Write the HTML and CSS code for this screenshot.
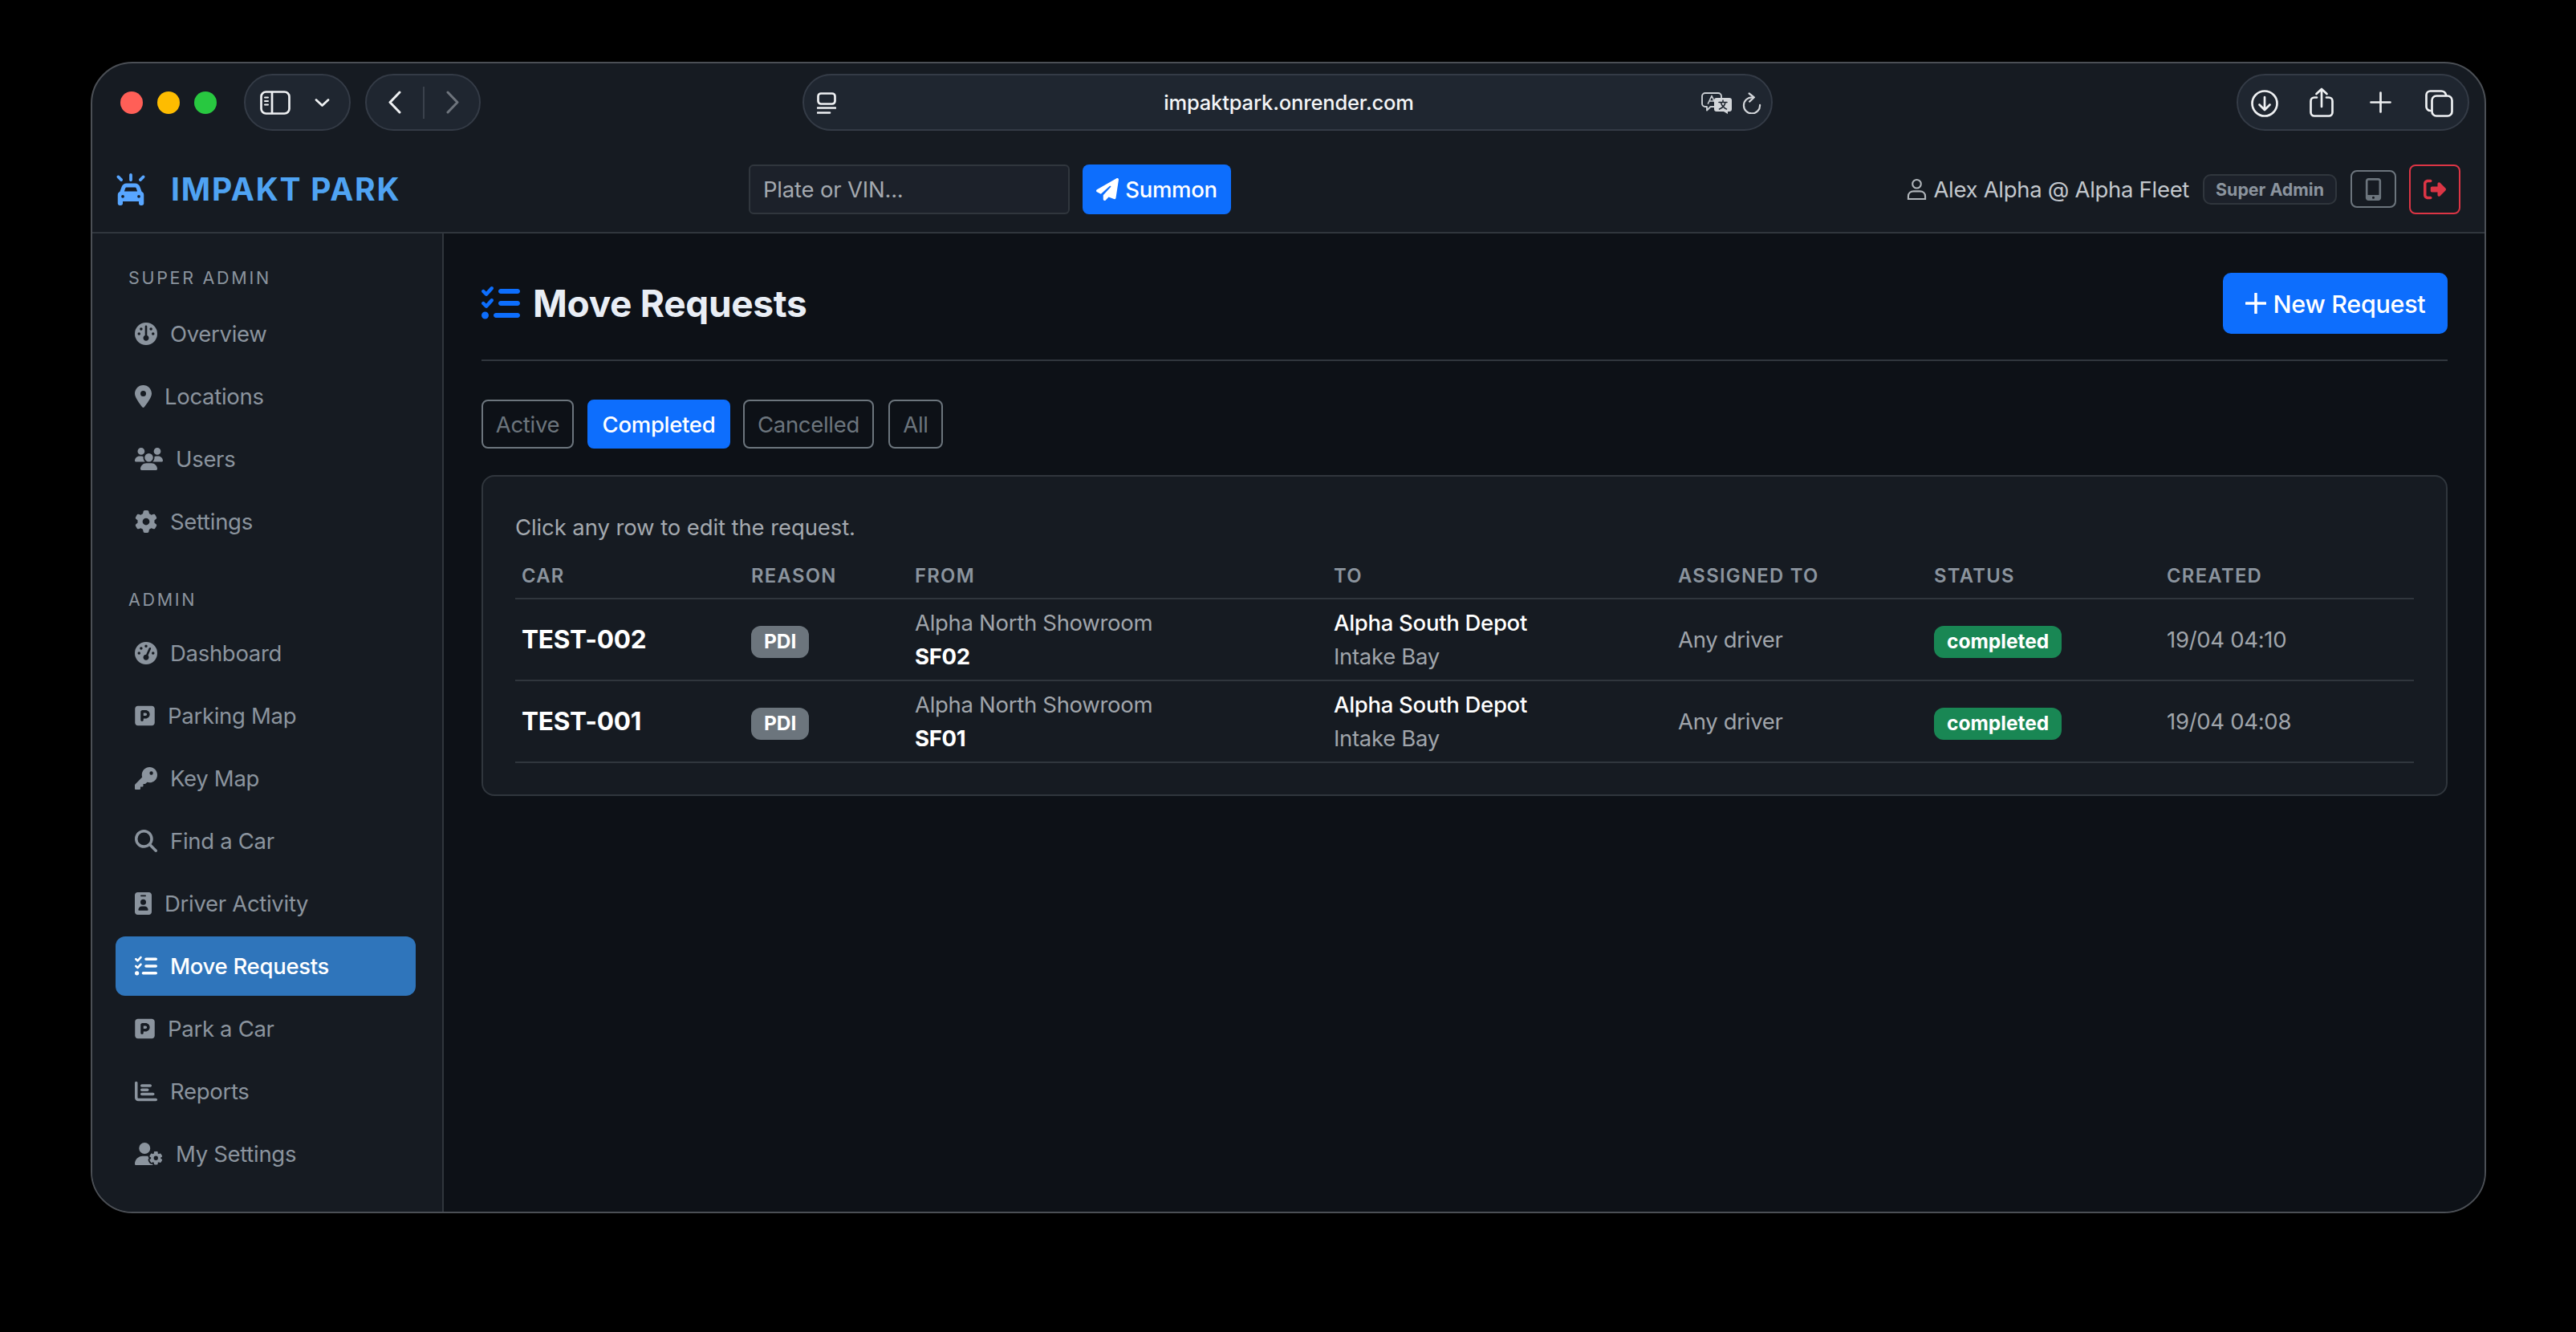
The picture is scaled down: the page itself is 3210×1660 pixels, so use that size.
FILE: index.html
```html
<!DOCTYPE html>
<html lang="en">
<head>
<meta charset="utf-8">
<title>Impakt Park - Move Requests</title>
<link rel="stylesheet" href="styles.css">
</head>
<body>
<div class="window">
  <header class="toolbar">
    <div class="lights"><span class="light l-red"></span><span class="light l-yellow"></span><span class="light l-green"></span></div>
    <div class="pill pill-side">
      <svg class="t-icon side-ic" viewBox="0 0 38 30"><rect x="1.500" y="1.500" width="35" height="27" rx="6"/><path d="M15 2v26"/><path d="M6 8.500h4M6 13h4M6 17.500h4" stroke-width="2"/></svg>
      <svg class="t-icon chev" viewBox="0 0 19 10"><path d="M2 1.500l7.500 7 7.500-7"/></svg>
    </div>
    <div class="pill pill-nav">
      <svg class="t-icon back" viewBox="0 0 17 29"><path d="M15 2L3 14.500 15 27"/></svg>
      <span class="pill-div"></span>
      <svg class="t-icon fwd" viewBox="0 0 17 29"><path d="M2 2l12 12.500L2 27"/></svg>
    </div>
    <div class="pill pill-url">
      <svg class="t-icon tabs-ic" viewBox="0 0 24 27"><rect x="1.500" y="1.500" width="21" height="13" rx="3.500"/><path d="M1 19.500h22M1 25.500h15"/></svg>
      <span class="url">impaktpark.onrender.com</span>
      <svg class="t-icon trans-ic" viewBox="0 0 38 27"><path d="M5 1h16a4 4 0 0 1 4 4v9a4 4 0 0 1-4 4H11.500L7 22.500V18H5a4 4 0 0 1-4-4V5a4 4 0 0 1 4-4z"/><path d="M8.500 14L13 4.500 17.500 14M10.200 11h5.600" stroke-width="1.700"/><path class="t-fill" d="M19 7h16a3 3 0 0 1 3 3v11a3 3 0 0 1-3 3h-2v3l-5-3h-9a3 3 0 0 1-3-3V10a3 3 0 0 1 3-3z"/><path class="t-dark" d="M22 12.500h10M27 10v2.500M30 12.500c-.8 4-3.500 7-7.500 8.500M24.500 13c1 3.500 3.500 6.500 7 8" stroke-width="1.500"/></svg>
      <svg class="t-icon reload-ic" viewBox="0 0 25 28"><path d="M13 6.500A10.500 10.500 0 1 0 23 16.500"/><path d="M9 1.500l6.500 5L9.500 12"/></svg>
    </div>
    <div class="pill pill-actions">
      <svg class="t-icon act-dl" viewBox="0 0 34 34"><circle cx="17" cy="17" r="15.500"/><path d="M17 9v16M10.500 18.500L17 25l6.500-6.500"/></svg>
      <svg class="t-icon act-sh" viewBox="0 0 30 37"><path d="M9 12.500H6a4.500 4.500 0 0 0-4.500 4.500v14A4.500 4.500 0 0 0 6 35.500h18a4.500 4.500 0 0 0 4.500-4.500V17a4.500 4.500 0 0 0-4.500-4.500h-3"/><path d="M15 24V2M8.500 8L15 2l6.500 6"/></svg>
      <svg class="t-icon act-pl" viewBox="0 0 27 27"><path d="M13.500 1.500v24M1.500 13.500h24"/></svg>
      <svg class="t-icon act-tb" viewBox="0 0 35 34"><path d="M6.500 26A5 5 0 0 1 1.500 21V6.500a5 5 0 0 1 5-5H20a6 6 0 0 1 6 5"/><rect x="8.500" y="7.500" width="25" height="25" rx="5.500"/></svg>
    </div>
  </header>

  <nav class="navbar">
    <a class="brand">
      <svg class="brand-ic" viewBox="0 0 512 512"><path d="M280 24c0-13.300-10.700-24-24-24s-24 10.700-24 24v80c0 13.300 10.700 24 24 24s24-10.700 24-24V24zM185.800 224H326.200c6.800 0 12.800 4.300 15.100 10.600L360.300 288H151.700l19-53.400c2.300-6.400 8.300-10.600 15.100-10.600zm-75.300-10.900L82.200 292.400C62.100 300.900 48 320.800 48 344v40 64 32c0 17.700 14.300 32 32 32H96c17.700 0 32-14.300 32-32V448H384v32c0 17.700 14.300 32 32 32h16c17.700 0 32-14.300 32-32V448 384 344c0-23.200-14.100-43.100-34.200-51.600l-28.300-79.300C390.100 181.300 360 160 326.200 160H185.800c-33.800 0-64 21.300-75.300 53.100zM128 344a24 24 0 1 1 0 48 24 24 0 1 1 0-48zm232 24a24 24 0 1 1 48 0 24 24 0 1 1 -48 0zM39 39c-9.400 9.400-9.400 24.600 0 33.900l48 48c9.400 9.400 24.600 9.400 33.900 0s9.400-24.600 0-33.900L73 39c-9.400-9.400-24.600-9.400-33.900 0zm400 0L391 87c-9.400 9.400-9.400 24.600 0 33.900s24.600 9.400 33.900 0l48-48c9.400-9.400 9.400-24.600 0-33.900s-24.600-9.400-33.900 0z"/></svg>
      <span class="brand-text">IMPAKT PARK</span>
    </a>
    <form class="summon">
      <input class="summon-input" type="text" placeholder="Plate or VIN...">
      <button class="btn-primary summon-btn" type="button">
        <svg class="summon-ic" viewBox="0 0 512 512"><path d="M498.100 5.600c10.100 7 15.400 19.100 13.500 31.200l-64 416c-1.500 9.700-7.400 18.200-16 23s-18.900 5.400-28 1.600L284 427.700l-68.500 74.100c-8.900 9.700-22.900 12.900-35.200 8.100S160 493.200 160 480V396.400c0-4 1.500-7.800 4.200-10.700L331.800 202.800c5.800-6.300 5.600-16-.4-22s-15.700-6.400-22-.7L106 360.800 17.700 316.600C7.100 311.300 .3 300.700 0 288.900s5.900-22.800 16.100-28.700l448-256c10.700-6.100 23.900-5.500 34 1.400z"/></svg>
        Summon
      </button>
    </form>
    <div class="userbar">
      <svg class="user-ic" viewBox="0 0 26 28"><circle cx="13" cy="7.500" r="5.500"/><path d="M2 27h22v-3.500c0-4-3-6.500-7-6.500H9c-4 0-7 2.500-7 6.500z"/></svg>
      <span class="user-name">Alex Alpha @ Alpha Fleet</span>
      <span class="role-badge">Super Admin</span>
      <button class="icon-btn phone-btn" type="button">
        <svg class="phone-ic" viewBox="0 0 384 512"><path d="M80 0C44.700 0 16 28.700 16 64V448c0 35.300 28.700 64 64 64H304c35.300 0 64-28.700 64-64V64c0-35.300-28.700-64-64-64H80zM64 64c0-8.800 7.200-16 16-16H304c8.800 0 16 7.200 16 16V384H64V64zM192 472a28 28 0 1 1 0-56 28 28 0 1 1 0 56z"/></svg>
      </button>
      <button class="icon-btn logout-btn" type="button">
        <svg class="logout-ic" viewBox="0 0 512 512"><path d="M377.900 105.900L500.700 228.700c7.200 7.200 11.300 17.100 11.300 27.300s-4.100 20.100-11.300 27.300L377.900 406.100c-6.400 6.400-15 9.900-24 9.900c-18.700 0-33.900-15.200-33.900-33.900l0-62.100-128 0c-17.700 0-32-14.300-32-32l0-64c0-17.700 14.300-32 32-32l128 0 0-62.100c0-18.700 15.200-33.900 33.900-33.900c9 0 17.600 3.600 24 9.900zM160 96L96 96c-17.700 0-32 14.300-32 32l0 256c0 17.700 14.300 32 32 32l64 0c17.700 0 32 14.300 32 32s-14.300 32-32 32l-64 0c-53 0-96-43-96-96L0 128C0 75 43 32 96 32l64 0c17.700 0 32 14.300 32 32s-14.300 32-32 32z"/></svg>
      </button>
    </div>
  </nav>

  <div class="body-row">
    <aside class="sidebar">
      <div class="side-label">SUPER ADMIN</div>
      <a class="side-link"><svg class="ic w28" viewBox="0 0 512 512"><path d="M0 256a256 256 0 1 1 512 0A256 256 0 1 1 0 256zm320 96c0-26.900-16.500-49.900-40-59.300V88c0-13.300-10.700-24-24-24s-24 10.700-24 24V292.700c-23.500 9.500-40 32.500-40 59.300c0 35.300 28.700 64 64 64s64-28.700 64-64zM144 176a32 32 0 1 0 0-64 32 32 0 1 0 0 64zm-16 80a32 32 0 1 0 -64 0 32 32 0 1 0 64 0zm288 32a32 32 0 1 0 0-64 32 32 0 1 0 0 64zM400 144a32 32 0 1 0 -64 0 32 32 0 1 0 64 0z"/></svg>Overview</a>
      <a class="side-link"><svg class="ic w21" viewBox="0 0 384 512"><path d="M215.700 499.200C267 435 384 279.400 384 192C384 86 298 0 192 0S0 86 0 192c0 87.400 117 243 168.300 307.200c12.300 15.300 35.100 15.300 47.400 0zM192 128a64 64 0 1 1 0 128 64 64 0 1 1 0-128z"/></svg>Locations</a>
      <a class="side-link"><svg class="ic w35" viewBox="0 0 640 512"><path d="M144 0a80 80 0 1 1 0 160A80 80 0 1 1 144 0zM512 0a80 80 0 1 1 0 160A80 80 0 1 1 512 0zM0 298.700C0 239.800 47.800 192 106.700 192h42.700c15.900 0 31 3.500 44.600 9.700c-1.300 7.200-1.900 14.700-1.900 22.300c0 38.200 16.800 72.500 43.300 96c-.2 0-.4 0-.7 0H21.300C9.600 320 0 310.400 0 298.700zM405.300 320c-.2 0-.4 0-.7 0c26.600-23.500 43.300-57.800 43.300-96c0-7.600-.7-15-1.900-22.300c13.600-6.300 28.700-9.700 44.600-9.700h42.700C592.200 192 640 239.800 640 298.700c0 11.800-9.600 21.300-21.300 21.300H405.300zM224 224a96 96 0 1 1 192 0 96 96 0 1 1 -192 0zM128 485.300C128 411.700 187.700 352 261.300 352H378.700C452.300 352 512 411.700 512 485.300c0 14.700-11.900 26.700-26.700 26.700H154.700c-14.700 0-26.700-11.900-26.700-26.700z"/></svg>Users</a>
      <a class="side-link"><svg class="ic w28" viewBox="0 0 512 512"><path d="M495.900 166.600c3.200 8.700 .5 18.400-6.400 24.600l-43.300 39.400c1.100 8.300 1.700 16.800 1.700 25.400s-.6 17.100-1.700 25.400l43.300 39.400c6.900 6.200 9.600 15.900 6.400 24.600c-4.400 11.900-9.700 23.300-15.800 34.300l-4.700 8.100c-6.600 11-14 21.400-22.100 31.200c-5.900 7.200-15.700 9.600-24.500 6.800l-55.700-17.700c-13.400 10.300-28.200 18.900-44 25.400l-12.500 57.100c-2 9.100-9 16.300-18.200 17.800c-13.800 2.300-28 3.500-42.500 3.500s-28.700-1.200-42.500-3.500c-9.200-1.500-16.200-8.700-18.200-17.800l-12.500-57.100c-15.800-6.500-30.600-15.100-44-25.400L83.100 425.900c-8.800 2.800-18.600 .3-24.500-6.800c-8.100-9.800-15.500-20.200-22.100-31.200l-4.700-8.100c-6.100-11-11.400-22.400-15.800-34.300c-3.200-8.700-.5-18.400 6.400-24.600l43.300-39.400C64.600 273.100 64 264.600 64 256s.6-17.100 1.700-25.400L22.400 191.200c-6.900-6.200-9.600-15.900-6.400-24.600c4.400-11.900 9.700-23.300 15.800-34.300l4.700-8.100c6.600-11 14-21.400 22.100-31.200c5.900-7.200 15.700-9.600 24.500-6.800l55.700 17.700c13.400-10.300 28.200-18.900 44-25.400l12.500-57.100c2-9.100 9-16.300 18.200-17.800C227.300 1.200 241.500 0 256 0s28.700 1.200 42.500 3.500c9.200 1.500 16.200 8.700 18.200 17.800l12.500 57.100c15.800 6.500 30.600 15.100 44 25.400l55.700-17.700c8.800-2.800 18.600-.3 24.500 6.800c8.100 9.800 15.500 20.200 22.100 31.200l4.700 8.100c6.100 11 11.400 22.400 15.800 34.300zM256 336a80 80 0 1 0 0-160 80 80 0 1 0 0 160z"/></svg>Settings</a>

      <div class="side-label second">ADMIN</div>
      <a class="side-link"><svg class="ic w28" viewBox="0 0 512 512"><path d="M0 256a256 256 0 1 1 512 0A256 256 0 1 1 0 256zM288 96a32 32 0 1 0 -64 0 32 32 0 1 0 64 0zM256 416c35.300 0 64-28.700 64-64c0-17.400-6.900-33.100-18.100-44.600L366 161.700c5.300-12.100-.2-26.300-12.300-31.600s-26.300 .2-31.600 12.300L257.900 288c-.6 0-1.300 0-1.900 0c-35.300 0-64 28.700-64 64s28.700 64 64 64zM176 144a32 32 0 1 0 -64 0 32 32 0 1 0 64 0zM96 288a32 32 0 1 0 0-64 32 32 0 1 0 0 64zm352-32a32 32 0 1 0 -64 0 32 32 0 1 0 64 0z"/></svg>Dashboard</a>
      <a class="side-link"><svg class="ic w25" viewBox="0 0 448 512"><path d="M64 32C28.700 32 0 60.700 0 96V416c0 35.300 28.700 64 64 64H384c35.300 0 64-28.700 64-64V96c0-35.300-28.700-64-64-64H64zM192 256h48c17.700 0 32-14.300 32-32s-14.300-32-32-32H192v64zm48 64H192v32c0 17.700-14.300 32-32 32s-32-14.300-32-32V288 168c0-22.100 17.900-40 40-40h72c53 0 96 43 96 96s-43 96-96 96z"/></svg>Parking Map</a>
      <a class="side-link"><svg class="ic w28" viewBox="0 0 512 512"><path d="M336 352c97.200 0 176-78.800 176-176S433.200 0 336 0S160 78.800 160 176c0 18.700 2.900 36.800 8.300 53.700L7 391c-4.500 4.500-7 10.600-7 17v80c0 13.300 10.700 24 24 24h80c13.300 0 24-10.700 24-24V448h40c13.300 0 24-10.700 24-24V384h40c6.400 0 12.500-2.500 17-7l33.300-33.300c16.900 5.400 35 8.300 53.700 8.300zM376 96a40 40 0 1 1 0 80 40 40 0 1 1 0-80z"/></svg>Key Map</a>
      <a class="side-link"><svg class="ic w28" viewBox="0 0 512 512"><path d="M416 208c0 45.900-14.900 88.300-40 122.700L502.600 457.400c12.500 12.500 12.500 32.800 0 45.300s-32.800 12.500-45.300 0L330.700 376c-34.400 25.200-76.800 40-122.700 40C93.100 416 0 322.900 0 208S93.100 0 208 0S416 93.100 416 208zM208 352a144 144 0 1 0 0-288 144 144 0 1 0 0 288z"/></svg>Find a Car</a>
      <a class="side-link"><svg class="ic w21" viewBox="0 0 384 512"><path d="M64 0C28.700 0 0 28.700 0 64V448c0 35.300 28.700 64 64 64H320c35.300 0 64-28.700 64-64V64c0-35.300-28.700-64-64-64H64zm96 320h64c44.200 0 80 35.800 80 80c0 8.800-7.200 16-16 16H96c-8.800 0-16-7.200-16-16c0-44.200 35.800-80 80-80zm-32-96a64 64 0 1 1 128 0 64 64 0 1 1 -128 0zM144 64h96c8.800 0 16 7.200 16 16s-7.200 16-16 16H144c-8.800 0-16-7.200-16-16s7.200-16 16-16z"/></svg>Driver Activity</a>
      <a class="side-link active"><svg class="ic w28" viewBox="0 0 512 512"><path d="M152.100 38.200c9.900 8.900 10.700 24 1.800 33.900l-72 80c-4.400 4.900-10.600 7.800-17.200 7.900s-12.900-2.400-17.600-7L7 113C-2.300 103.600-2.300 88.400 7 79s24.600-9.400 33.900 0l22.100 22.100 55.100-61.200c8.900-9.900 24-10.700 33.900-1.800zm0 160c9.900 8.900 10.700 24 1.800 33.900l-72 80c-4.400 4.900-10.600 7.800-17.200 7.900s-12.900-2.400-17.600-7L7 273c-9.400-9.400-9.400-24.600 0-33.900s24.600-9.400 33.900 0l22.100 22.100 55.100-61.200c8.900-9.900 24-10.700 33.900-1.800zM224 96c0-17.700 14.300-32 32-32H480c17.700 0 32 14.300 32 32s-14.300 32-32 32H256c-17.700 0-32-14.300-32-32zm0 160c0-17.700 14.300-32 32-32H480c17.700 0 32 14.300 32 32s-14.300 32-32 32H256c-17.700 0-32-14.300-32-32zM160 416c0-17.700 14.300-32 32-32H480c17.700 0 32 14.300 32 32s-14.300 32-32 32H192c-17.700 0-32-14.300-32-32zM48 368a48 48 0 1 1 0 96 48 48 0 1 1 0-96z"/></svg>Move Requests</a>
      <a class="side-link"><svg class="ic w25" viewBox="0 0 448 512"><path d="M64 32C28.700 32 0 60.700 0 96V416c0 35.300 28.700 64 64 64H384c35.300 0 64-28.700 64-64V96c0-35.300-28.700-64-64-64H64zM192 256h48c17.700 0 32-14.300 32-32s-14.300-32-32-32H192v64zm48 64H192v32c0 17.700-14.300 32-32 32s-32-14.300-32-32V288 168c0-22.100 17.900-40 40-40h72c53 0 96 43 96 96s-43 96-96 96z"/></svg>Park a Car</a>
      <a class="side-link"><svg class="ic w28" viewBox="0 0 512 512"><path d="M32 32c17.700 0 32 14.300 32 32V400c0 8.800 7.200 16 16 16H480c17.700 0 32 14.300 32 32s-14.300 32-32 32H80c-44.200 0-80-35.800-80-80V64C0 46.300 14.300 32 32 32zm96 96c0-17.700 14.300-32 32-32l192 0c17.700 0 32 14.300 32 32s-14.300 32-32 32l-192 0c-17.700 0-32-14.300-32-32zm32 64H288c17.700 0 32 14.300 32 32s-14.300 32-32 32H160c-17.700 0-32-14.300-32-32s14.300-32 32-32zm0 96H416c17.700 0 32 14.300 32 32s-14.300 32-32 32H160c-17.700 0-32-14.300-32-32s14.300-32 32-32z"/></svg>Reports</a>
      <a class="side-link"><svg class="ic w35" viewBox="0 0 640 512"><path d="M224 0a128 128 0 1 1 0 256A128 128 0 1 1 224 0zM178.300 304h91.400c11.800 0 23.400 1.200 34.500 3.300c-2.100 18.500 7.400 35.600 21.800 44.800c-16.600 10.600-26.700 31.600-20 53.300c4 12.900 9.400 25.500 16.400 37.600s15.200 23.100 24.400 33c15.700 16.900 39.600 18.400 57.200 8.700v.9c0 9.200 2.700 18.500 7.900 26.300H29.700C13.300 512 0 498.700 0 482.300C0 383.800 79.800 304 178.300 304zM436 218.200c0-7 4.500-13.300 11.300-14.800c10.500-2.400 21.500-3.700 32.700-3.700s22.200 1.300 32.700 3.700c6.800 1.500 11.300 7.800 11.300 14.800v30.600c7.900 3.400 15.400 7.700 22.300 12.800l24.900-14.300c6.100-3.500 13.700-2.700 18.500 2.400c7.600 8.100 14.300 17.200 20.100 27.200s10.300 20.400 13.500 31c2.100 6.700-1.100 13.700-7.200 17.200l-25 14.400c.4 4 .7 8.100 .7 12.300s-.2 8.200-.7 12.300l25 14.400c6.100 3.500 9.200 10.500 7.200 17.200c-3.300 10.600-7.800 21-13.500 31s-12.500 19.100-20.100 27.200c-4.800 5.100-12.500 5.900-18.500 2.400l-24.900-14.300c-6.900 5.100-14.300 9.400-22.300 12.800l0 30.600c0 7-4.500 13.300-11.300 14.800c-10.500 2.400-21.500 3.700-32.700 3.700s-22.200-1.300-32.700-3.700c-6.800-1.500-11.300-7.800-11.300-14.800V454.800c-8-3.400-15.600-7.700-22.500-12.900l-24.700 14.300c-6.100 3.500-13.700 2.700-18.500-2.400c-7.600-8.100-14.300-17.200-20.100-27.200s-10.300-20.400-13.500-31c-2.100-6.700 1.100-13.700 7.200-17.200l24.800-14.300c-.4-4.100-.7-8.200-.7-12.400s.3-8.300 .7-12.400L343.800 325c-6.100-3.500-9.200-10.500-7.200-17.200c3.300-10.600 7.700-21 13.500-31s12.500-19.100 20.100-27.200c4.800-5.100 12.400-5.900 18.500-2.400l24.800 14.300c6.900-5.100 14.500-9.400 22.500-12.900V218.200zm92.100 133.500a48.100 48.100 0 1 0 -96.100 0 48.100 48.100 0 1 0 96.100 0z"/></svg>My Settings</a>
    </aside>

    <main class="main">
      <div class="page-head">
        <h1 class="page-title">
          <svg class="title-ic" viewBox="0 0 512 512"><path d="M152.100 38.200c9.900 8.900 10.700 24 1.800 33.900l-72 80c-4.400 4.900-10.600 7.800-17.200 7.900s-12.900-2.400-17.600-7L7 113C-2.300 103.600-2.300 88.400 7 79s24.600-9.400 33.900 0l22.100 22.100 55.100-61.200c8.900-9.900 24-10.700 33.900-1.800zm0 160c9.900 8.900 10.700 24 1.800 33.900l-72 80c-4.400 4.900-10.600 7.800-17.200 7.900s-12.900-2.400-17.600-7L7 273c-9.400-9.400-9.400-24.600 0-33.900s24.600-9.400 33.900 0l22.100 22.100 55.100-61.200c8.900-9.900 24-10.700 33.900-1.800zM224 96c0-17.700 14.300-32 32-32H480c17.700 0 32 14.300 32 32s-14.300 32-32 32H256c-17.700 0-32-14.300-32-32zm0 160c0-17.700 14.300-32 32-32H480c17.700 0 32 14.300 32 32s-14.300 32-32 32H256c-17.700 0-32-14.300-32-32zM160 416c0-17.700 14.300-32 32-32H480c17.700 0 32 14.300 32 32s-14.300 32-32 32H192c-17.700 0-32-14.300-32-32zM48 368a48 48 0 1 1 0 96 48 48 0 1 1 0-96z"/></svg>
          Move Requests
        </h1>
        <button class="btn-primary new-btn" type="button"><svg class="plus-ic" viewBox="0 0 26 26"><path d="M13 1v24M1 13h24"/></svg>New Request</button>
      </div>

      <div class="tabs">
        <a class="tab tab-1">Active</a>
        <a class="tab tab-on">Completed</a>
        <a class="tab tab-3">Cancelled</a>
        <a class="tab tab-4">All</a>
      </div>

      <section class="card">
        <p class="hint">Click any row to edit the request.</p>
        <table class="grid">
          <colgroup><col class="c1"><col class="c2"><col class="c3"><col class="c4"><col class="c5"><col class="c6"><col class="c7"></colgroup>
          <thead><tr><th>CAR</th><th>REASON</th><th>FROM</th><th>TO</th><th>ASSIGNED TO</th><th>STATUS</th><th>CREATED</th></tr></thead>
          <tbody>
            <tr>
              <td class="car">TEST-002</td>
              <td><span class="badge gray">PDI</span></td>
              <td><div class="muted">Alpha North Showroom</div><div class="strong">SF02</div></td>
              <td><div class="white">Alpha South Depot</div><div class="muted">Intake Bay</div></td>
              <td class="muted">Any driver</td>
              <td><span class="badge green">completed</span></td>
              <td class="muted">19/04 04:10</td>
            </tr>
            <tr>
              <td class="car">TEST-001</td>
              <td><span class="badge gray">PDI</span></td>
              <td><div class="muted">Alpha North Showroom</div><div class="strong">SF01</div></td>
              <td><div class="white">Alpha South Depot</div><div class="muted">Intake Bay</div></td>
              <td class="muted">Any driver</td>
              <td><span class="badge green">completed</span></td>
              <td class="muted">19/04 04:08</td>
            </tr>
          </tbody>
        </table>
      </section>
    </main>
  </div>
</div>
</body>
</html>
```

FILE: styles.css
```css
* { box-sizing: border-box; }
html, body { margin: 0; height: 100%; }
body {
  background: #000;
  padding: 77px 0 0 113px;
  font-family: Inter, "Liberation Sans", sans-serif;
  letter-spacing: -0.3px;
  color: #c9d1d9;
  overflow: hidden;
}
.window {
  width: 2985px;
  height: 1435px;
  border: 2px solid #4b4f55;
  border-radius: 52px;
  background: #161b22;
  overflow: hidden;
  display: flex;
  flex-direction: column;
}

/* browser toolbar */
.toolbar {
  height: 103px;
  flex: none;
  display: flex;
  align-items: flex-start;
  padding-top: 13px;
}
.lights { display: flex; gap: 18px; margin: 22px 0 0 35px; }
.light { width: 28px; height: 28px; border-radius: 50%; }
.l-red { background: #ff5f57; }
.l-yellow { background: #febc00; }
.l-green { background: #28c840; }
.pill {
  height: 71px;
  border: 2px solid #343b46;
  border-radius: 36px;
  background: #1f2630;
  display: flex;
  align-items: center;
  flex: none;
}
.t-icon { fill: none; stroke: #eef0f2; stroke-width: 2.700; stroke-linecap: round; stroke-linejoin: round; display: block; flex: none; }
.pill-side { width: 133px; margin-left: 34px; padding-left: 18px; }
.side-ic { width: 38px; height: 30px; }
.chev { width: 19px; height: 10px; margin-left: 30px; }
.pill-nav { width: 144px; margin-left: 18px; padding-left: 26px; }
.back { width: 17px; height: 29px; stroke-width: 3; }
.pill-div { width: 1.500px; height: 40px; background: #3a414c; margin: 0 27px; }
.fwd { width: 17px; height: 29px; stroke: #6e747c; stroke-width: 3; }
.pill-url { width: 1209px; margin-left: 401px; padding: 0 12px 0 16px; }
.tabs-ic { width: 24px; height: 27px; margin-top: 2px; }
.url { flex: 1; text-align: center; font-size: 25.500px; font-weight: 500; letter-spacing: -0.15px; color: #f3f5f7; padding-left: 50px; }
.trans-ic { width: 38px; height: 27px; margin: 2px 13px 0 0; stroke: #c8ccd1; stroke-width: 1.900; }
.trans-ic .t-fill { fill: #d3d6da; stroke: none; }
.trans-ic .t-dark { stroke: #1f2630; }
.reload-ic { width: 24px; height: 27px; margin-top: 2px; stroke: #d3d6da; stroke-width: 2.300; }
.pill-actions { width: 290px; margin-left: 578px; padding-left: 16px; }
.act-dl { width: 34px; height: 34px; margin-top: 2px; }
.act-sh { width: 30px; height: 37px; margin: -1px 0 0 39px; }
.act-pl { width: 27px; height: 27px; margin-left: 45px; }
.act-tb { width: 35px; height: 34px; margin: 2px 0 0 42px; }

/* app navbar */
.navbar {
  height: 109px;
  flex: none;
  display: flex;
  align-items: center;
  padding: 0 30px 0 31px;
  border-bottom: 2px solid #30363d;
  background: #161b22;
}
.brand { width: 787px; flex: none; display: flex; align-items: center; }
.brand-ic { width: 40px; height: 40px; fill: #58a6ff; margin-left: -3px; flex: none; }
.brand-text { font-size: 39px; font-weight: 700; letter-spacing: 1.800px; color: #4fa3f3; margin-left: 30px; }
.summon { display: flex; gap: 16px; }
.summon-input {
  width: 400px;
  height: 62px;
  border: 2px solid #30363d;
  border-radius: 6px;
  background: #1c212a;
  padding: 0 16px;
  font: 400 27.500px Inter, sans-serif;
  letter-spacing: -0.2px;
  color: #c9d1d9;
}
.summon-input::placeholder { color: #a4a9af; opacity: 1; }
.btn-primary {
  border: 0;
  background: #0d6efd;
  color: #fff;
  font-family: Inter, sans-serif;
  font-weight: 500;
  letter-spacing: -0.3px;
  display: flex;
  align-items: center;
  justify-content: center;
}
.summon-btn { width: 185px; height: 62px; border-radius: 8px; font-size: 27.500px; gap: 8px; }
.summon-ic { width: 28px; height: 28px; fill: #fff; }
.userbar { margin-left: auto; display: flex; align-items: center; }
.user-ic { width: 25px; height: 27px; fill: none; stroke: #b0b5ba; stroke-width: 2.200; margin-right: 8px; }
.user-name { font-size: 27.500px; color: #c3c8cd; }
.role-badge {
  height: 38px;
  margin-left: 17px;
  padding: 0 14px;
  display: flex;
  align-items: center;
  border: 2px solid #30363d;
  border-radius: 10px;
  background: #1c212a;
  font-size: 21.400px;
  font-weight: 700;
  letter-spacing: 0;
  color: #8b949e;
}
.icon-btn { background: transparent; padding: 0; display: flex; align-items: center; justify-content: center; border-radius: 8px; }
.phone-btn { width: 57px; height: 47px; margin-left: 17px; border: 2px solid #6c757d; }
.phone-ic { width: 21px; height: 28px; fill: #6c757d; }
.logout-btn { width: 64px; height: 62px; margin-left: 16px; border: 2px solid #dc3545; }
.logout-ic { width: 28px; height: 28px; fill: #dc3545; }

/* layout */
.body-row { flex: 1; display: flex; min-height: 0; }
.sidebar {
  width: 438px;
  flex: none;
  background: #161b22;
  border-right: 2px solid #30363d;
  padding: 42px 33px 0 29px;
}
.side-label {
  font-size: 21.500px;
  font-weight: 400;
  letter-spacing: 2.700px;
  color: #8b949e;
  line-height: 26px;
  padding-left: 16px;
  margin-bottom: 20px;
}
.side-label.second { margin-top: 47px; margin-bottom: 17px; }
.side-link {
  height: 74px;
  margin-bottom: 4px;
  padding-left: 24px;
  border-radius: 12px;
  display: flex;
  align-items: center;
  font-size: 27.500px;
  color: #8b949e;
}
.ic { height: 28px; fill: #8b949e; flex: none; margin-right: 16px; }
.w28 { width: 28px; }
.w21 { width: 21px; }
.w25 { width: 25px; }
.w35 { width: 35px; }
.side-link.active { background: #2f75bb; color: #fff; font-weight: 500; }
.side-link.active .ic { fill: #fff; }

/* main */
.main { flex: 1; min-width: 0; background: #0d1117; padding: 49px 46px 0 47px; }
.page-head {
  display: flex;
  justify-content: space-between;
  align-items: center;
  padding-bottom: 32px;
  border-bottom: 2px solid #30363d;
}
.page-title { margin: 2px 0 0; display: flex; align-items: center; font-size: 46px; font-weight: 700; letter-spacing: -0.3px; color: #e9eef5; line-height: 1.2; }
.title-ic { width: 48px; height: 48px; fill: #0d6efd; margin: -2px 16px 0 0; }
.new-btn { width: 280px; height: 76px; border-radius: 10px; font-size: 30.500px; gap: 9px; }
.plus-ic { width: 26px; height: 26px; fill: none; stroke: #fff; stroke-width: 3.500; stroke-linecap: round; }
.tabs { display: flex; margin-top: 48px; height: 61px; }
.tab {
  display: flex;
  align-items: center;
  justify-content: center;
  height: 61px;
  border: 2px solid #6c757d;
  border-radius: 8px;
  font-size: 27.500px;
  color: #6c757d;
}
.tab-1 { width: 115px; }
.tab-on { width: 178px; margin-left: 17px; background: #0d6efd; border-color: #0d6efd; color: #fff; font-weight: 500; }
.tab-3 { width: 163px; margin-left: 16px; }
.tab-4 { width: 68px; margin-left: 18px; }

.card {
  margin-top: 33px;
  height: 400px;
  border: 2px solid #30363d;
  border-radius: 16px;
  background: #161b22;
  padding: 42px 40px 0 40px;
}
.hint { margin: 0 0 21px; font-size: 27.500px; letter-spacing: -0.1px; line-height: 42px; color: #a4a9af; }
.grid { width: 100%; border-collapse: collapse; table-layout: fixed; }
.c1 { width: 286px; } .c2 { width: 204px; } .c3 { width: 522px; } .c4 { width: 429px; } .c5 { width: 319px; } .c6 { width: 290px; } .c7 { width: auto; }
.grid th {
  height: 47px;
  padding: 0 8px 10px;
  text-align: left;
  font-size: 23.800px;
  font-weight: 600;
  letter-spacing: 1.300px;
  color: #8b949e;
  border-bottom: 2px solid #30363d;
}
.grid td {
  height: 102px;
  padding: 0 8px;
  font-size: 27.500px;
  line-height: 42px;
  border-bottom: 2px solid #30363d;
}
.muted { color: #a0a5ab; }
.white { color: #fff; font-weight: 500; }
.strong { color: #fff; font-weight: 700; }
.grid .car { font-size: 31.600px; font-weight: 700; color: #fff; }
.badge {
  display: inline-flex;
  align-items: center;
  justify-content: center;
  height: 40px;
  padding: 0 16px;
  border-radius: 12px;
  font-size: 24.500px;
  line-height: 1;
  font-weight: 700;
  letter-spacing: 0;
  color: #fff;
  vertical-align: middle;
  margin-top: 3px;
}
.gray { background: #6c757d; }
.green { background: #198754; }
```
